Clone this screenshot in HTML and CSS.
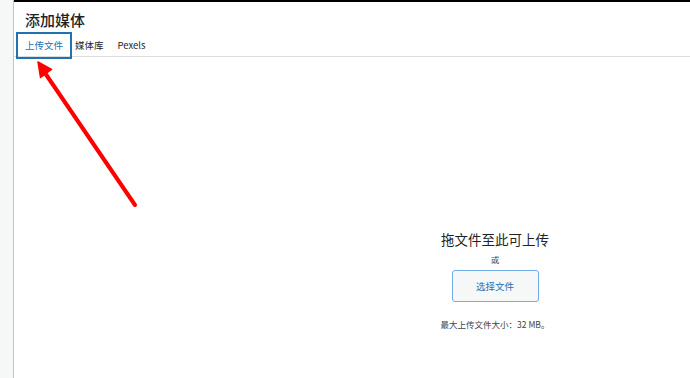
FILE: index.html
```html
<!DOCTYPE html>
<html lang="zh">
<head>
  <meta charset="UTF-8" />
  <title>添加媒体</title>
  <link rel="stylesheet" href="styles.css">
</head>
<body>
  <div class="sidebar"></div>
  <div class="modal">
    <h1 class="title">添加媒体</h1>
    <nav class="tabs">
      <a href="#upload" class="tab active">上传文件</a>
      <a href="#library" class="tab">媒体库</a>
      <a href="#pexels" class="tab">Pexels</a>
    </nav>
    <div class="content">
      <div class="uploader">
        <p class="drop-title">拖文件至此可上传</p>
        <p class="or">或</p>
        <button class="select-btn">选择文件</button>
        <p class="max-size">最大上传文件大小：32 MB。</p>
      </div>
    </div>
  </div>

  <svg class="arrow" width="690" height="378" viewBox="0 0 690 378">
    <line x1="135" y1="205" x2="45" y2="73" stroke="#ff0000" stroke-width="4" stroke-linecap="round" />
    <polygon points="38,62 51.5,69.5 40.5,77.5" fill="#ff0000" stroke="#ff0000" stroke-width="1.5" stroke-linejoin="round" />
  </svg>
</body>
</html>
```

FILE: styles.css
```css
body {
  margin: 0;
  height: 378px;
  display: flex;
  font-family: 'Noto Sans CJK SC', 'Noto Sans', sans-serif;
  color: #1d2327;
  background: #fff;
  overflow: hidden;
}

.sidebar {
  width: 13px;
  background: #f6f7f7;
  border-right: 1px solid #c3c4c7;
  flex-shrink: 0;
}

.modal {
  flex: 1;
  border-top: 2px solid #000;
  display: flex;
  flex-direction: column;
}

.title {
  margin: 0;
  padding: 7px 0 0 11px;
  font-size: 15px;
  line-height: 22px;
  font-weight: 500;
}

.tabs {
  margin-top: 1px;
  height: 24px;
  display: flex;
  align-items: flex-start;
  border-bottom: 1px solid #dcdcde;
}

.tab {
  text-decoration: none;
  color: #1d2327;
  font-size: 9.5px;
  line-height: 23px;
  padding: 0 5px;
  border: 2px solid transparent;
}

.tab.active {
  margin-left: 2px;
  padding: 0 7px;
  color: #2271b1;
  border-color: #2271b1;
}

.tab.active + .tab {
  padding-left: 1px;
}

.content {
  flex: 1;
  display: flex;
  justify-content: flex-end;
}

.uploader {
  width: 390px;
  display: flex;
  flex-direction: column;
  align-items: center;
  padding-top: 172px;
}

.uploader p {
  margin: 0;
}

.drop-title {
  font-size: 13.5px;
  line-height: 20px;
}

.or {
  font-size: 8.5px;
  line-height: 12px;
  margin-top: 4px !important;
  color: #3c434a;
}

.select-btn {
  margin-top: 5px;
  width: 87px;
  height: 32px;
  background: #f6f7f7;
  border: 1px solid #72aee6;
  border-radius: 3px;
  color: #2271b1;
  font-family: inherit;
  font-size: 9.5px;
  padding: 0;
}

.max-size {
  margin-top: 16px !important;
  font-size: 8.5px;
  line-height: 13px;
  color: #3c434a;
}

.arrow {
  position: absolute;
  left: 0;
  top: 0;
  pointer-events: none;
}
```
